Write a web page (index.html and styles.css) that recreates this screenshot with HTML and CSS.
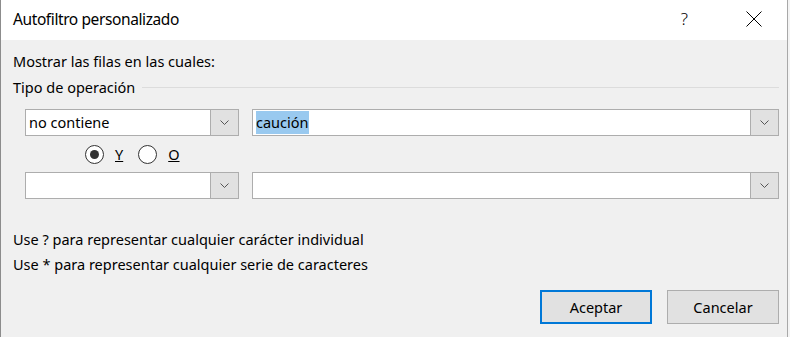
FILE: index.html
```html
<!DOCTYPE html>
<html>
<head>
<title>Autofiltro personalizado</title>
<link rel="stylesheet" href="styles.css">
</head>
<body>
<div class="dialog">
<div class="titlebar">
<span class="title">Autofiltro personalizado</span>
<span class="help">?</span>
<svg class="close" width="16" height="16" viewBox="0 0 16 16"><path d="M0.5 0.5 L15.5 15.5 M15.5 0.5 L0.5 15.5" stroke="#000" stroke-width="1" fill="none"/></svg>
</div>

<div class="content">
<p class="intro">Mostrar las filas en las cuales:</p>
<div class="group-label">
<span>Tipo de operación</span>
<span class="rule"></span>
</div>

<div class="row">
<div class="combo op">
<span class="value">no contiene</span>
<span class="arrow"><svg width="9" height="5" viewBox="0 0 9 5"><polyline points="0.5,0.5 4.5,4.5 8.5,0.5" stroke="#555" fill="none"/></svg></span>
</div>
<div class="combo val">
<span class="value"><span class="selected">caución</span></span>
<span class="arrow"><svg width="9" height="5" viewBox="0 0 9 5"><polyline points="0.5,0.5 4.5,4.5 8.5,0.5" stroke="#555" fill="none"/></svg></span>
</div>
</div>

<div class="radios">
<span class="radio checked"></span>
<span class="radio-label">Y</span>
<span class="radio"></span>
<span class="radio-label">O</span>
</div>

<div class="row">
<div class="combo op">
<span class="value"></span>
<span class="arrow"><svg width="9" height="5" viewBox="0 0 9 5"><polyline points="0.5,0.5 4.5,4.5 8.5,0.5" stroke="#555" fill="none"/></svg></span>
</div>
<div class="combo val">
<span class="value"></span>
<span class="arrow"><svg width="9" height="5" viewBox="0 0 9 5"><polyline points="0.5,0.5 4.5,4.5 8.5,0.5" stroke="#555" fill="none"/></svg></span>
</div>
</div>

<p class="hint first">Use ? para representar cualquier carácter individual</p>
<p class="hint">Use * para representar cualquier serie de caracteres</p>

<div class="buttons">
<button type="button" class="btn default">Aceptar</button>
<button type="button" class="btn">Cancelar</button>
</div>
</div>
</div>
</body>
</html>
```

FILE: styles.css
```css
body {
margin: 0;
background-color: #f4f4f4;
font-family: "Noto Sans", "Open Sans", sans-serif;
font-size: 14.5px;
color: #000;
}

.dialog {
width: 788px;
height: 337px;
border-left: 1px solid #8c8c8c;
border-right: 1px solid #a8a8a8;
box-sizing: border-box;
background-color: #f0f0f0;
overflow: hidden;
}

.titlebar {
height: 40px;
background-color: #fff;
display: flex;
align-items: center;
padding-left: 12px;
}

.title {
font-size: 15.5px;
letter-spacing: -0.4px;
flex: 1;
margin-top: -2px;
}

.help {
font-size: 17px;
font-weight: 300;
margin-right: 58px;
margin-top: -3px;
}

.close {
margin-right: 25px;
margin-top: -2px;
}

.content {
padding: 0 8px 0 12px;
}

.intro {
margin: 11px 0 0 0;
line-height: 20px;
}

.group-label {
display: flex;
align-items: center;
margin-top: 6px;
height: 20px;
line-height: 20px;
}

.rule {
flex: 1;
height: 1px;
background-color: #dcdcdc;
margin-left: 7px;
margin-top: 1px;
}

.row {
display: flex;
gap: 13px;
margin-left: 12px;
}

.group-label + .row {
margin-top: 12px;
}

.combo {
display: flex;
height: 27px;
box-sizing: border-box;
border: 1px solid #adadad;
background-color: #fff;
}

.combo.op {
width: 214px;
}

.combo.val {
flex: 1;
}

.combo .value {
flex: 1;
padding-left: 3px;
line-height: 25px;
}

.selected {
background-color: #99c9ef;
padding: 1px 0 2px 0;
}

.arrow {
width: 27px;
border-left: 1px solid #adadad;
background-color: #e1e1e1;
display: flex;
align-items: center;
justify-content: center;
}

.radios {
display: flex;
align-items: center;
height: 36px;
margin-left: 72px;
}

.radio {
width: 19px;
height: 19px;
box-sizing: border-box;
border: 1px solid #333;
border-radius: 50%;
background-color: #fff;
display: flex;
align-items: center;
justify-content: center;
}

.radio.checked::after {
content: "";
width: 9px;
height: 9px;
border-radius: 50%;
background-color: #333;
}

.radio-label {
text-decoration: underline;
margin-left: 11px;
margin-right: 15px;
}

.hint {
margin: 0;
line-height: 25px;
}

.hint.first {
margin-top: 28px;
}

.buttons {
display: flex;
justify-content: flex-end;
gap: 15px;
margin-top: 13px;
}

.btn {
width: 112px;
height: 34px;
font-family: "Noto Sans", "Open Sans", sans-serif;
font-size: 14.5px;
color: #000;
background-color: #e1e1e1;
border: 1px solid #adadad;
padding: 0;
}

.btn.default {
border: 2px solid #0078d7;
}
```
